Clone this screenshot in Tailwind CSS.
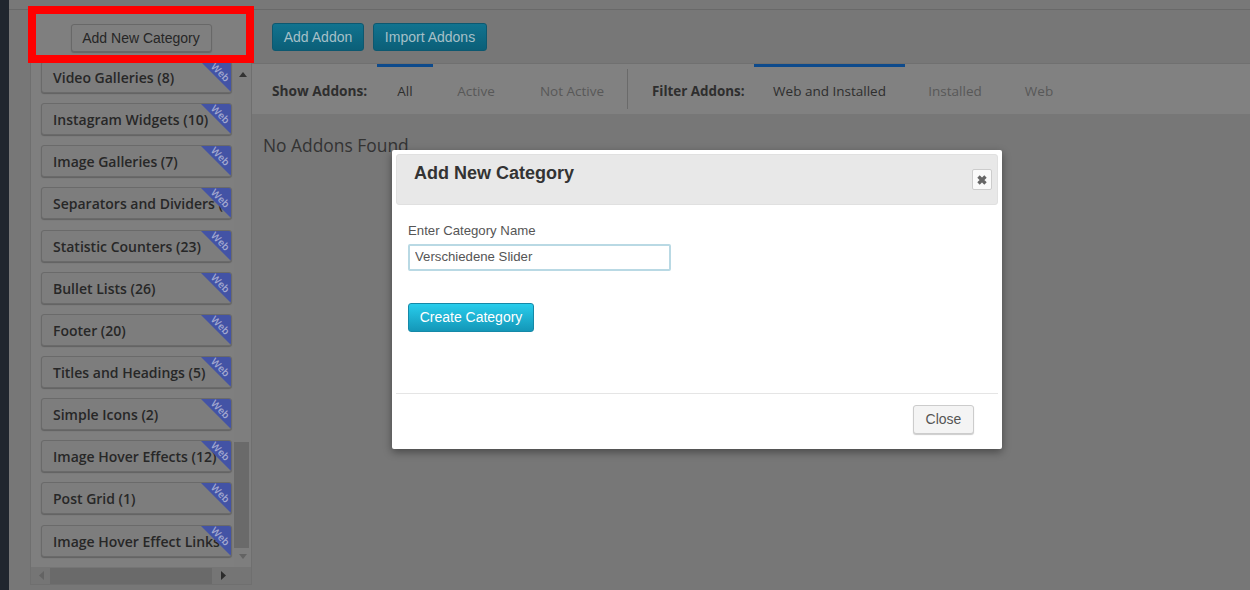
<!DOCTYPE html>
<html lang="en">
  <head>
    <meta charset="UTF-8" />
    <title>Addons</title>
    <script src="https://cdn.jsdelivr.net/npm/@tailwindcss/browser@4"></script>
  </head>
  <body class="w-[1250px] h-[590px] overflow-hidden relative bg-[#777777] font-['Open_Sans',sans-serif]">
    <div class="flex h-full">
      <div class="w-[9px] shrink-0 bg-[#20262e]"></div>
      <div class="flex-1 flex flex-col min-w-0">
        <div class="h-[10px] shrink-0 border-b border-[#696969] bg-[#787878]"></div>
        <div class="flex flex-1 min-h-0 pl-[21px]">
          <!-- categories -->
          <aside class="w-[222px] shrink-0 flex flex-col h-[575px] border-x border-b border-[#6f6f6f] bg-[#7f7f7f]">
            <div class="h-[51px] shrink-0 flex items-center justify-center pt-[5px]">
              <button class="w-[141px] h-[28px] rounded-[3px] border border-[#686868] bg-[#7f7f7f] shadow-[0_1px_1px_#666] text-[14px] font-['Liberation_Sans',sans-serif] text-[#262626]">Add New Category</button>
            </div>
            <div class="flex flex-1 min-h-0">
              <div class="w-[203px] shrink-0 pl-[10px] flex flex-col gap-[10.15px] overflow-hidden">
                <div class="relative h-[32px] shrink-0 w-[191px] overflow-hidden rounded-[3px] border border-[#6a6a6a] bg-[#7d7d7d] shadow-[0_1px_1px_#626262] flex items-center pl-[11px] pt-[1px] text-[14px] font-semibold text-[#272727] whitespace-nowrap">Video Galleries (8)<svg class="absolute right-0 top-0" width="30" height="30" viewBox="0 0 30 30"><path d="M0 0H30V30Z" fill="#4353a5"/></svg><span class="absolute right-0 top-[5px] rotate-45 text-[10px] leading-none font-semibold text-[#a2a8cf]">Web</span></div>
                <div class="relative h-[32px] shrink-0 w-[191px] overflow-hidden rounded-[3px] border border-[#6a6a6a] bg-[#7d7d7d] shadow-[0_1px_1px_#626262] flex items-center pl-[11px] pt-[1px] text-[14px] font-semibold text-[#272727] whitespace-nowrap">Instagram Widgets (10)<svg class="absolute right-0 top-0" width="30" height="30" viewBox="0 0 30 30"><path d="M0 0H30V30Z" fill="#4353a5"/></svg><span class="absolute right-0 top-[5px] rotate-45 text-[10px] leading-none font-semibold text-[#a2a8cf]">Web</span></div>
                <div class="relative h-[32px] shrink-0 w-[191px] overflow-hidden rounded-[3px] border border-[#6a6a6a] bg-[#7d7d7d] shadow-[0_1px_1px_#626262] flex items-center pl-[11px] pt-[1px] text-[14px] font-semibold text-[#272727] whitespace-nowrap">Image Galleries (7)<svg class="absolute right-0 top-0" width="30" height="30" viewBox="0 0 30 30"><path d="M0 0H30V30Z" fill="#4353a5"/></svg><span class="absolute right-0 top-[5px] rotate-45 text-[10px] leading-none font-semibold text-[#a2a8cf]">Web</span></div>
                <div class="relative h-[32px] shrink-0 w-[191px] overflow-hidden rounded-[3px] border border-[#6a6a6a] bg-[#7d7d7d] shadow-[0_1px_1px_#626262] flex items-center pl-[11px] pt-[1px] text-[14px] font-semibold text-[#272727] whitespace-nowrap">Separators and Dividers (5)<svg class="absolute right-0 top-0" width="30" height="30" viewBox="0 0 30 30"><path d="M0 0H30V30Z" fill="#4353a5"/></svg><span class="absolute right-0 top-[5px] rotate-45 text-[10px] leading-none font-semibold text-[#a2a8cf]">Web</span></div>
                <div class="relative h-[32px] shrink-0 w-[191px] overflow-hidden rounded-[3px] border border-[#6a6a6a] bg-[#7d7d7d] shadow-[0_1px_1px_#626262] flex items-center pl-[11px] pt-[1px] text-[14px] font-semibold text-[#272727] whitespace-nowrap">Statistic Counters (23)<svg class="absolute right-0 top-0" width="30" height="30" viewBox="0 0 30 30"><path d="M0 0H30V30Z" fill="#4353a5"/></svg><span class="absolute right-0 top-[5px] rotate-45 text-[10px] leading-none font-semibold text-[#a2a8cf]">Web</span></div>
                <div class="relative h-[32px] shrink-0 w-[191px] overflow-hidden rounded-[3px] border border-[#6a6a6a] bg-[#7d7d7d] shadow-[0_1px_1px_#626262] flex items-center pl-[11px] pt-[1px] text-[14px] font-semibold text-[#272727] whitespace-nowrap">Bullet Lists (26)<svg class="absolute right-0 top-0" width="30" height="30" viewBox="0 0 30 30"><path d="M0 0H30V30Z" fill="#4353a5"/></svg><span class="absolute right-0 top-[5px] rotate-45 text-[10px] leading-none font-semibold text-[#a2a8cf]">Web</span></div>
                <div class="relative h-[32px] shrink-0 w-[191px] overflow-hidden rounded-[3px] border border-[#6a6a6a] bg-[#7d7d7d] shadow-[0_1px_1px_#626262] flex items-center pl-[11px] pt-[1px] text-[14px] font-semibold text-[#272727] whitespace-nowrap">Footer (20)<svg class="absolute right-0 top-0" width="30" height="30" viewBox="0 0 30 30"><path d="M0 0H30V30Z" fill="#4353a5"/></svg><span class="absolute right-0 top-[5px] rotate-45 text-[10px] leading-none font-semibold text-[#a2a8cf]">Web</span></div>
                <div class="relative h-[32px] shrink-0 w-[191px] overflow-hidden rounded-[3px] border border-[#6a6a6a] bg-[#7d7d7d] shadow-[0_1px_1px_#626262] flex items-center pl-[11px] pt-[1px] text-[14px] font-semibold text-[#272727] whitespace-nowrap">Titles and Headings (5)<svg class="absolute right-0 top-0" width="30" height="30" viewBox="0 0 30 30"><path d="M0 0H30V30Z" fill="#4353a5"/></svg><span class="absolute right-0 top-[5px] rotate-45 text-[10px] leading-none font-semibold text-[#a2a8cf]">Web</span></div>
                <div class="relative h-[32px] shrink-0 w-[191px] overflow-hidden rounded-[3px] border border-[#6a6a6a] bg-[#7d7d7d] shadow-[0_1px_1px_#626262] flex items-center pl-[11px] pt-[1px] text-[14px] font-semibold text-[#272727] whitespace-nowrap">Simple Icons (2)<svg class="absolute right-0 top-0" width="30" height="30" viewBox="0 0 30 30"><path d="M0 0H30V30Z" fill="#4353a5"/></svg><span class="absolute right-0 top-[5px] rotate-45 text-[10px] leading-none font-semibold text-[#a2a8cf]">Web</span></div>
                <div class="relative h-[32px] shrink-0 w-[191px] overflow-hidden rounded-[3px] border border-[#6a6a6a] bg-[#7d7d7d] shadow-[0_1px_1px_#626262] flex items-center pl-[11px] pt-[1px] text-[14px] font-semibold text-[#272727] whitespace-nowrap">Image Hover Effects (12)<svg class="absolute right-0 top-0" width="30" height="30" viewBox="0 0 30 30"><path d="M0 0H30V30Z" fill="#4353a5"/></svg><span class="absolute right-0 top-[5px] rotate-45 text-[10px] leading-none font-semibold text-[#a2a8cf]">Web</span></div>
                <div class="relative h-[32px] shrink-0 w-[191px] overflow-hidden rounded-[3px] border border-[#6a6a6a] bg-[#7d7d7d] shadow-[0_1px_1px_#626262] flex items-center pl-[11px] pt-[1px] text-[14px] font-semibold text-[#272727] whitespace-nowrap">Post Grid (1)<svg class="absolute right-0 top-0" width="30" height="30" viewBox="0 0 30 30"><path d="M0 0H30V30Z" fill="#4353a5"/></svg><span class="absolute right-0 top-[5px] rotate-45 text-[10px] leading-none font-semibold text-[#a2a8cf]">Web</span></div>
                <div class="relative h-[32px] shrink-0 w-[191px] overflow-hidden rounded-[3px] border border-[#6a6a6a] bg-[#7d7d7d] shadow-[0_1px_1px_#626262] flex items-center pl-[11px] pt-[1px] text-[14px] font-semibold text-[#272727] whitespace-nowrap">Image Hover Effect Links<svg class="absolute right-0 top-0" width="30" height="30" viewBox="0 0 30 30"><path d="M0 0H30V30Z" fill="#4353a5"/></svg><span class="absolute right-0 top-[5px] rotate-45 text-[10px] leading-none font-semibold text-[#a2a8cf]">Web</span></div>
              </div>
              <!-- vertical scrollbar -->
              <div class="w-[17px] shrink-0 flex flex-col bg-[#7e7e7e]">
                <svg class="shrink-0 mt-[11px] ml-[5px]" width="8" height="5" viewBox="0 0 8 5"><path d="M4 0L8 5H0Z" fill="#333333"/></svg>
                <div class="flex-1"></div>
                <div class="h-[106px] shrink-0 w-[15px] bg-[#6a6a6a]"></div>
                <svg class="shrink-0 mt-[6px] mb-[8px] ml-[5px]" width="8" height="5" viewBox="0 0 8 5"><path d="M0 0H8L4 5Z" fill="#636363"/></svg>
              </div>
            </div>
            <!-- horizontal scrollbar -->
            <div class="h-[17px] shrink-0 flex items-center bg-[#757575]">
              <svg class="shrink-0 ml-[8px]" width="5" height="9" viewBox="0 0 5 9"><path d="M5 0V9L0 4.5Z" fill="#636363"/></svg>
              <div class="ml-[6px] w-[162px] h-[16px] bg-[#6a6a6a]"></div>
              <svg class="shrink-0 ml-[9px]" width="5" height="9" viewBox="0 0 5 9"><path d="M0 0L5 4.5L0 9Z" fill="#2b2b2b"/></svg>
            </div>
          </aside>
          <!-- main -->
          <main class="flex-1 min-w-0">
            <div class="h-[54px] pl-[20px] pt-[13px] flex gap-[9px] items-start border-b border-[#707070] font-['Liberation_Sans',sans-serif] text-[14px] text-[#a6c0c8]">
              <button class="w-[92px] h-[28px] rounded-[3px] border border-[#0d5870] bg-gradient-to-b from-[#12738f] to-[#0b5f78]">Add Addon</button>
              <button class="w-[114px] h-[28px] rounded-[3px] border border-[#0d5870] bg-gradient-to-b from-[#12738f] to-[#0b5f78]">Import Addons</button>
            </div>
            <div class="h-[50px] pl-[20px] flex items-center bg-[#818181] text-[13.5px] text-[#585858]">
              <span class="w-[105px] pt-[4px] text-[13.7px] font-bold text-[#2e2e2e]">Show Addons:</span>
              <div class="flex h-full gap-1">
                <span class="w-[56px] h-full pt-[1px] flex items-center justify-center border-t-[3px] border-[#0d4a8c] text-[#2e2e2e]">All</span>
                <span class="w-[78px] h-full pt-[1px] flex items-center justify-center border-t-[3px] border-transparent">Active</span>
                <span class="w-[106px] h-full pt-[1px] flex items-center justify-center border-t-[3px] border-transparent">Not Active</span>
              </div>
              <div class="w-px h-[40px] bg-[#6a6a6a] ml-[2px] mr-[24px]"></div>
              <span class="w-[102px] pt-[4px] text-[13.4px] font-bold text-[#2e2e2e]">Filter Addons:</span>
              <div class="flex h-full gap-1">
                <span class="w-[151px] h-full pt-[1px] flex items-center justify-center border-t-[3px] border-[#0d4a8c] text-[#2e2e2e]">Web and Installed</span>
                <span class="w-[92px] h-full pt-[1px] flex items-center justify-center border-t-[3px] border-transparent">Installed</span>
                <span class="w-[68px] h-full pt-[1px] flex items-center justify-center border-t-[3px] border-transparent">Web</span>
              </div>
            </div>
            <p class="pl-[11px] pt-[19px] text-[17.4px] leading-[24px] text-[#333333]">No Addons Found</p>
          </main>
        </div>
      </div>
    </div>

    <!-- red annotation box -->
    <div class="absolute left-[28px] top-[6px] w-[226px] h-[57px] border-[8px] border-[#ff0000]"></div>

    <!-- modal -->
    <div class="absolute left-[392px] top-[150px] w-[610px] h-[299px] flex flex-col rounded-[2px] bg-white shadow-[0_3px_9px_rgba(0,0,0,0.4)] font-['Liberation_Sans',sans-serif]">
      <div class="mx-[4px] mt-[4px] h-[51px] shrink-0 flex justify-between rounded-[3px] border border-[#e0e0e0] bg-[#e8e8e8] pl-[17px] pr-[5px]">
        <h2 class="pt-[7px] text-[18px] leading-[22px] font-bold text-[#333333]">Add New Category</h2>
        <button class="mt-[14px] w-[20px] h-[21px] flex items-center justify-center rounded-[2px] border border-[#cccccc] bg-[#fafafa]">
          <svg width="12" height="12" viewBox="0 0 12 12"><path d="M2.5 2.5L9.5 9.5M9.5 2.5L2.5 9.5" stroke="#666666" stroke-width="3.4"/></svg>
        </button>
      </div>
      <div class="flex-1 mx-[4px] pl-[12px] pt-[17px] border-b border-[#e5e5e5]">
        <label class="block text-[13.2px] leading-[18px] text-[#555555]">Enter Category Name</label>
        <input class="block mt-[4px] w-[263px] h-[27px] px-[5px] pb-[2px] rounded-[2px] border-2 border-[#b9d9e4] text-[13.2px] text-[#555555] outline-none" value="Verschiedene Slider" />
        <button class="block mt-[32px] w-[126px] h-[29px] rounded-[3px] border border-[#1589a8] bg-gradient-to-b from-[#28cdec] to-[#1497b8] text-[14px] text-white">Create Category</button>
      </div>
      <div class="h-[55px] shrink-0 flex justify-end items-start pt-[11px] pr-[28px]">
        <button class="w-[61px] h-[29px] rounded-[3px] border border-[#cccccc] bg-[#f4f4f4] shadow-[0_1px_1px_#cccccc] text-[14px] text-[#555555]">Close</button>
      </div>
    </div>
  </body>
</html>
